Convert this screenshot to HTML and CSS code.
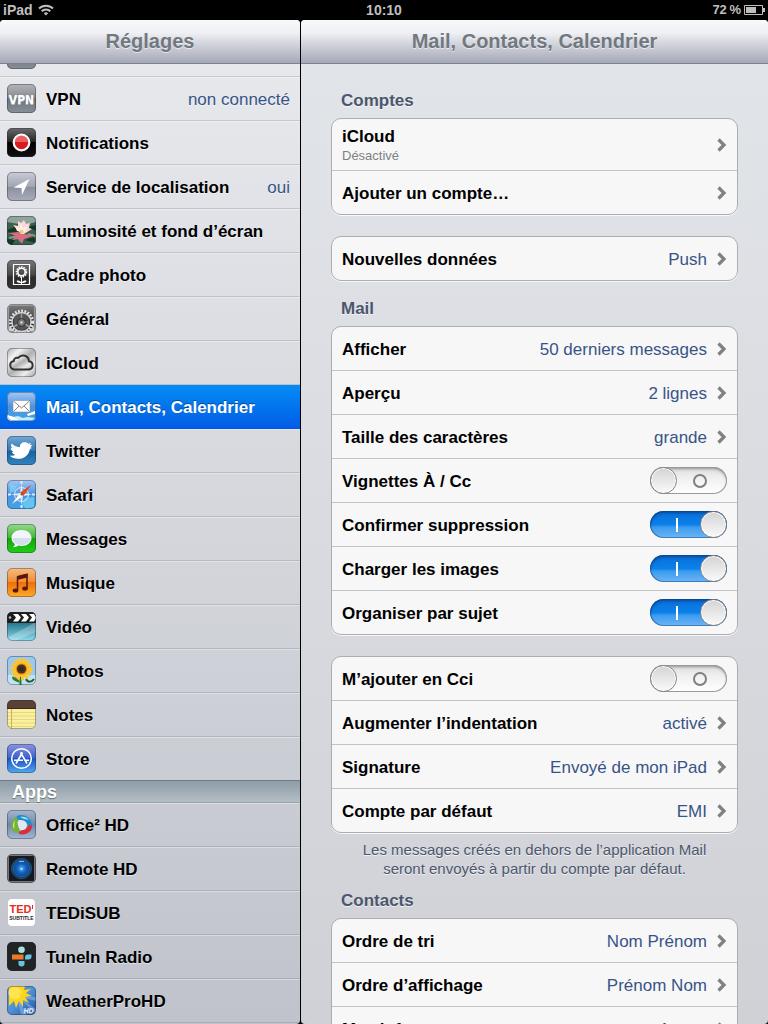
FILE: index.html
```html
<!DOCTYPE html>
<html lang="fr">

<head>
    <meta charset="UTF-8">
    <meta name="viewport" content="width=device-width, initial-scale=1.0">
    <link rel="stylesheet" href="styles.css">
    <title>Réglages</title>
</head>

<body>

    <!-- gradients shared by the icons -->
    <svg class="defs" aria-hidden="true">
        <defs>
            <linearGradient id="grey" x2="0" y2="1"><stop offset="0" stop-color="#b3b5b9"/><stop offset=".5" stop-color="#84888e"/><stop offset=".5" stop-color="#6d737b"/><stop offset="1" stop-color="#888f97"/></linearGradient>
            <linearGradient id="black" x2="0" y2="1"><stop offset="0" stop-color="#6b6b6b"/><stop offset=".5" stop-color="#222"/><stop offset=".5" stop-color="#000"/><stop offset="1" stop-color="#111"/></linearGradient>
            <linearGradient id="silver" x2="0" y2="1"><stop offset="0" stop-color="#c9ccd6"/><stop offset=".5" stop-color="#a2a6b2"/><stop offset=".5" stop-color="#8b8f9d"/><stop offset="1" stop-color="#a9adba"/></linearGradient>
            <linearGradient id="dark" x2="0" y2="1"><stop offset="0" stop-color="#777"/><stop offset=".5" stop-color="#484848"/><stop offset=".6" stop-color="#2c2c2c"/><stop offset="1" stop-color="#333"/></linearGradient>
            <linearGradient id="metal" x2="1" y2="1"><stop offset="0" stop-color="#aaa"/><stop offset=".25" stop-color="#f2f2f2"/><stop offset=".5" stop-color="#b0b0b0"/><stop offset=".75" stop-color="#eee"/><stop offset="1" stop-color="#999"/></linearGradient>
            <linearGradient id="sky" x2="0" y2="1"><stop offset="0" stop-color="#a6c8f5"/><stop offset=".5" stop-color="#4d93e2"/><stop offset="1" stop-color="#3ba6ea"/></linearGradient>
            <linearGradient id="twitter" x2="0" y2="1"><stop offset="0" stop-color="#74a9d4"/><stop offset=".5" stop-color="#2f78b4"/><stop offset=".5" stop-color="#14619f"/><stop offset="1" stop-color="#3284bd"/></linearGradient>
            <linearGradient id="green" x2="0" y2="1"><stop offset="0" stop-color="#98d98e"/><stop offset=".5" stop-color="#3bb731"/><stop offset=".5" stop-color="#17a30f"/><stop offset="1" stop-color="#1fcf14"/></linearGradient>
            <linearGradient id="orange" x2="0" y2="1"><stop offset="0" stop-color="#f6bf83"/><stop offset=".5" stop-color="#ef8a30"/><stop offset=".5" stop-color="#ee6f09"/><stop offset="1" stop-color="#ffab2b"/></linearGradient>
            <linearGradient id="film" x2="0" y2="1"><stop offset="0.300" stop-color="#176a80"/><stop offset="1" stop-color="#8fdcec"/></linearGradient>
            <linearGradient id="store" x2="0" y2="1"><stop offset="0" stop-color="#8a96e0"/><stop offset=".5" stop-color="#3c5ecb"/><stop offset=".5" stop-color="#1f52c4"/><stop offset="1" stop-color="#4fa9ee"/></linearGradient>
            <linearGradient id="office" x2="0" y2="1"><stop offset="0" stop-color="#a9b8cb"/><stop offset=".5" stop-color="#6d88ad"/><stop offset="1" stop-color="#a5b8d2"/></linearGradient>
            <radialGradient id="lens"><stop offset="0" stop-color="#5fb5ff"/><stop offset=".4" stop-color="#1568c4"/><stop offset="1" stop-color="#073463"/></radialGradient>
            <linearGradient id="weather" x2="1" y2="1"><stop offset="0" stop-color="#5c9fe0"/><stop offset=".5" stop-color="#4f90d8"/><stop offset="1" stop-color="#1c4e9c"/></linearGradient>
        </defs>
        <symbol id="chevron" viewBox="0 0 10 14"><path d="M1.500 1.500L7 7l-5.500 5.500" fill="none" stroke="#808080" stroke-width="3.200"/></symbol>
    </svg>

    <header class="statusbar">
        <div class="status-left">
            <span>iPad</span>
            <svg width="16" height="12" viewBox="0 0 16 12" fill="none" stroke="#bfbfbf" stroke-width="2"><path d="M1 4.500a10 10 0 0 1 14 0M3.700 7.300a6 6 0 0 1 8.600 0"/><path d="M8 11.500L5.800 9.300a3.200 3.200 0 0 1 4.400 0z" fill="#bfbfbf" stroke="none"/></svg>
        </div>
        <time>10:10</time>
        <div class="status-right">
            <span>72&#8201;%</span>
            <svg width="21" height="10" viewBox="0 0 21 10"><path d="M.5.500h18v9H.5z" fill="none" stroke="#bfbfbf"/><path d="M2 2h10v6H2zM19 3h2v4h-2z" fill="#bfbfbf"/></svg>
        </div>
    </header>

    <div class="panels">

        <aside class="sidebar">
            <h1 class="titlebar">Réglages</h1>
            <nav class="menu">
                <ul class="menu-list">
                    <li><a href="#" aria-label="Réseau"><svg class="icon" viewBox="0 0 29 29"><rect width="29" height="29" fill="url(#grey)"/></svg></a></li>
                    <li><a href="#">
                        <svg class="icon" viewBox="0 0 29 29"><rect width="29" height="29" fill="url(#grey)"/><text x="14.500" y="19.500" font-size="12" font-weight="bold" font-family="DejaVu Sans Condensed, Liberation Sans, sans-serif" text-anchor="middle" fill="#fff">VPN</text></svg>
                        <span>VPN</span><em>non connecté</em></a></li>
                    <li><a href="#">
                        <svg class="icon" viewBox="0 0 29 29"><rect width="29" height="29" fill="url(#black)"/><circle cx="14.500" cy="14.500" r="7.800" fill="#d81b1e" stroke="#fff" stroke-width="2.200"/><path d="M8 14a6.500 6.500 0 0 1 13 0z" fill="#f08080" opacity=".7"/></svg>
                        <span>Notifications</span></a></li>
                    <li><a href="#">
                        <svg class="icon" viewBox="0 0 29 29"><rect width="29" height="29" fill="url(#silver)"/><path d="M22.500 7L6.500 15.500l8 .5.500 7z" fill="#fff"/></svg>
                        <span>Service de localisation</span><em>oui</em></a></li>
                    <li><a href="#">
                        <svg class="icon" viewBox="0 0 29 29"><rect width="29" height="29" fill="#38604a"/><path d="M0 0h29v6L18 9 0 6z" fill="#8ea59b"/><path d="M0 14l8-3 4 5-7 4zM20 11l9-2v6zM18 24l9-3 2 6zM0 23l8 1-3 5H0z" fill="#193527"/><path d="M2 22l8-2 4 6M21 18l8 2" stroke="#6ca27f" stroke-width="2" fill="none"/><path d="M1 17l10-1 4 2 13 1-8 3-3 1-2 5-3-5-7 1 4-4z" fill="#dc6a83"/><path d="M14 18L6 9l5 1 0-5 3 2 3-3 2 4 4-1-1 5 3 1-8 5z" fill="#fbd7de"/><path d="M10 15l-2-5 4 3 2-6 2 6 4-3-2 6z" fill="#fff4e4"/><circle cx="14.500" cy="15.500" r="2" fill="#eccc74"/></svg>
                        <span>Luminosité et fond d’écran</span></a></li>
                    <li><a href="#">
                        <svg class="icon" viewBox="0 0 29 29"><rect width="29" height="29" fill="url(#dark)"/><path d="M6.500 4.500h16v20h-16z" fill="none" stroke="#fff" stroke-width="1.200"/><circle cx="14.500" cy="12" r="3.700" fill="none" stroke="#fff" stroke-width="1.600"/><circle cx="14.500" cy="12" r="5" fill="none" stroke="#fff" stroke-width="1.500" stroke-dasharray="1.500 1"/><path d="M14.500 17v7" stroke="#fff"/><path d="M14.500 23c-1-2-3-3-5-2 1 2 3 2 5 2 2 0 4 0 5-2-2-1-4 0-5 2" fill="#fff"/></svg>
                        <span>Cadre photo</span></a></li>
                    <li><a href="#">
                        <svg class="icon" viewBox="0 0 29 29"><rect width="29" height="29" fill="#b9bbbd"/><rect x="2" y="2" width="25" height="25" rx="2" fill="url(#dark)" stroke="#777"/><circle cx="14.500" cy="18" r="11" fill="none" stroke="#e3e3e3" stroke-width="3" stroke-dasharray="1.800 1.400"/><circle cx="14.500" cy="18" r="9.500" fill="none" stroke="#d0d0d0" stroke-width="1.500"/><circle cx="14.500" cy="18" r="8" fill="#555"/><path d="M14.500 18V9M14.500 18l8 5M14.500 18l-8 5" stroke="#999" stroke-width="1.500"/><circle cx="14.500" cy="18.500" r="4" fill="#777" stroke="#303030"/><circle cx="14.500" cy="18.500" r="1.200" fill="#ddd"/><path d="M2 22l6 5H2zM27 22l-6 5h6z" fill="#ccc"/></svg>
                        <span>Général</span></a></li>
                    <li><a href="#">
                        <svg class="icon" viewBox="0 0 29 29"><rect width="29" height="29" fill="url(#metal)"/><path d="M7 21.500a4.300 4.300 0 0 1-.2-8.500 3.500 3.500 0 0 1 4.500-3.200 6 6 0 0 1 10.700 3.400 4.200 4.200 0 0 1 .2 8.300z" fill="url(#metal)" stroke="#333" stroke-width="2"/></svg>
                        <span>iCloud</span></a></li>
                    <li class="selected"><a href="#" aria-current="page">
                        <svg class="icon" viewBox="0 0 29 29"><rect width="29" height="29" fill="url(#sky)"/><path d="M0 23l6 2 5-1 5 2 4-1 9 1v3H0z" fill="#c9ecfb"/><path d="M0 23l7 2 6 4H0zM20 22l8-3v3l-7 2z" fill="#fff"/><rect x="6" y="8.500" width="17" height="11.500" fill="#fff" stroke="#8b9299" stroke-width=".6"/><path d="M6.500 9l8 7 8-7M6.500 19.500l5.500-5.500M22.500 19.500L17 14" fill="none" stroke="#777" stroke-width=".9"/></svg>
                        <span>Mail, Contacts, Calendrier</span></a></li>
                    <li><a href="#">
                        <svg class="icon" viewBox="0 0 29 29"><rect width="29" height="29" fill="url(#twitter)"/><path d="M2.500 19.500c2 .5 4 .2 6-.6-2-.3-3-1.400-3.600-2.800h1.800c-2-1-3-2.300-3-4.300l1.800.5C3.700 10.500 3.700 9 4.700 7.500c2.300 2.300 5 3.500 8.300 3.700-.4-3 1.700-5 4.800-5 1.500 0 2.700.5 3.600 1.500l2.600-.7-1 2.100 2.500.1-2.200 2 1.700.8-2.200.9C22.300 18.500 17.500 22.800 11 22.800c-3.300-.1-6.200-.8-8.500-3.300z" fill="#fff"/></svg>
                        <span>Twitter</span></a></li>
                    <li><a href="#">
                        <svg class="icon" viewBox="0 0 29 29"><rect width="29" height="29" fill="url(#sky)"/><path d="M18 18l9-1v10l-8 2-4-5zM3 4l7 2-2 5-5 2z" fill="#7fdcf5" opacity=".6"/><circle cx="14.500" cy="14.500" r="7" fill="none" stroke="#d8eeff"/><path d="M14.500 4l1.500 9 9 1.500-9 1.500-1.500 9-1.500-9-9-1.500 9-1.500z" fill="#e0f0ff"/><path d="M14.500 1v3M14.500 25v3M1 14.500h3M25 14.500h3" stroke="#d8eeff" stroke-width="2"/><path d="M24.500 4.500L12.800 12.800l3.400 3.400z" fill="#e34a1c"/><path d="M5 24l7.800-11.200 3.400 3.400z" fill="#fff" stroke="#aaa" stroke-width=".4"/><circle cx="14.500" cy="14.500" r="1" fill="#555"/></svg>
                        <span>Safari</span></a></li>
                    <li><a href="#">
                        <svg class="icon" viewBox="0 0 29 29"><rect width="29" height="29" fill="url(#green)"/><path d="M14.500 6c5.800 0 10 3.500 10 8s-4.200 8-10 8c-1.200 0-2.300-.1-3.300-.4C10 22.800 8 23.500 6 23.300c1-1 1.700-2 1.800-3.300C5.800 18.600 4.500 16.500 4.500 14c0-4.500 4.200-8 10-8z" fill="#f2f5fa"/><path d="M5.500 14h18c-.5 5-5 7-9 7s-8.500-2-9-7z" fill="#d5dfec"/></svg>
                        <span>Messages</span></a></li>
                    <li><a href="#">
                        <svg class="icon" viewBox="0 0 29 29"><rect width="29" height="29" fill="url(#orange)"/><path d="M10.500 22V9l9.500-2.500V20" fill="none" stroke="#5b160a" stroke-width="1.500"/><path d="M10 8l10.500-2.500v4L10 12z" fill="#5b160a"/><ellipse cx="8.500" cy="22.500" rx="2.800" ry="2.100" fill="#5b160a"/><ellipse cx="18" cy="20.500" rx="2.800" ry="2.100" fill="#5b160a"/></svg>
                        <span>Musique</span></a></li>
                    <li><a href="#">
                        <svg class="icon" viewBox="0 0 29 29"><rect width="29" height="29" fill="url(#film)"/><path d="M0 26L27 11h2v9L8 29H0z" fill="#fff" opacity=".25"/><rect width="29" height="11" fill="#1c1c1c"/><path d="M6 2h5l3 3.500L11 9.500H6L9 5.500zM14 2h5l3 3.500-3 4h-5l3-4zM22 2h5l2 3v1l-2 3.500h-5l3-4z" fill="#fff"/><circle cx="3" cy="5.500" r="1.300" fill="#bbb"/></svg>
                        <span>Vidéo</span></a></li>
                    <li><a href="#">
                        <svg class="icon" viewBox="0 0 29 29"><rect width="29" height="29" fill="#9cc9f1"/><path d="M0 19h29v10H0z" fill="#bfe2f7"/><path d="M13.500 20v9" stroke="#337a25" stroke-width="2"/><path d="M13 27c-1-4-4-7-8-6 0 3 3 4 8 6" fill="#337a25"/><path d="M19 23c2 4 6 3 8 0" fill="none" stroke="#285e28" stroke-width="2"/><circle cx="14.500" cy="13" r="8" fill="#fdb81e"/><circle cx="14.500" cy="13" r="8.500" fill="none" stroke="#ffc629" stroke-width="5" stroke-dasharray="2.600 1.100"/><circle cx="14.500" cy="13" r="5.500" fill="#e98a0c"/><circle cx="14.500" cy="13" r="4.600" fill="#4a2f1a"/><circle cx="14.500" cy="13" r="2.200" fill="#282b30"/></svg>
                        <span>Photos</span></a></li>
                    <li><a href="#">
                        <svg class="icon" viewBox="0 0 29 29"><rect width="29" height="29" fill="#fbf19a"/><path d="M0 12.500h29M0 16h29M0 19.500h29M0 23h29M0 26.500h29" stroke="#dcd188" stroke-width=".8"/><path d="M4.500 9v20" stroke="#c79a5b" stroke-width=".8"/><rect width="29" height="8.500" fill="#5b4038"/><path d="M0 8.500h29" stroke="#3c2823" stroke-width="1.200"/></svg>
                        <span>Notes</span></a></li>
                    <li class="last"><a href="#">
                        <svg class="icon" viewBox="0 0 29 29"><rect width="29" height="29" fill="url(#store)"/><circle cx="14.500" cy="14.500" r="9.800" fill="none" stroke="#fff" stroke-width="1.500"/><path d="M15.500 8.500L9 19.500M13.500 8.500l6.500 11M7 16.300h9M18.500 16.300H22" stroke="#fff" stroke-width="1.600" fill="none"/></svg>
                        <span>Store</span></a></li>
                </ul>

                <h2 class="menu-heading">Apps</h2>

                <ul class="menu-list">
                    <li><a href="#">
                        <svg class="icon" viewBox="0 0 29 29"><rect width="29" height="29" fill="url(#office)"/><circle cx="14.500" cy="15" r="5.500" fill="#dfe7f0"/><path d="M10 6c6-3 14 1 15 9-3 1-5-1-6-3-2-2-5-2-7-2-2-1-3-2-2-4z" fill="#1b8fc9"/><path d="M10 6c-6 3-8 12-3 16 2 2 5 1 6-2-2-3-3-7-2-10-1-1-2-2-1-4z" fill="#75b03b"/><path d="M25 15c1 6-6 11-13 9-1-2 2-4 5-4 3-1 4-4 5-5 1 0 2 1 3 0z" fill="#d92f3d"/><path d="M13 7c4-1 7 0 9 3-3-1-6-1-9-3z" fill="#9fdcf5"/><path d="M8 10c-3 4-2 7-1 9 1-3 0-5 1-9z" fill="#c5e58a"/></svg>
                        <span>Office² HD</span></a></li>
                    <li><a href="#">
                        <svg class="icon" viewBox="0 0 29 29"><rect width="29" height="29" fill="#777"/><rect x="2" y="2" width="25" height="25" rx="1" fill="#141a21"/><circle cx="14.500" cy="14.500" r="10" fill="url(#lens)" stroke="#35587a"/><circle cx="14.500" cy="14.500" r="8" fill="none" stroke="#2473c0" stroke-width=".7"/><path d="M12 7.500h5" stroke="#8fb9dd"/><circle cx="14.500" cy="15" r="1" fill="#c5e8ff"/></svg>
                        <span>Remote HD</span></a></li>
                    <li><a href="#">
                        <svg class="icon plain" viewBox="0 0 29 29"><rect x="1" y="1" width="27" height="27" rx="4" fill="#fff"/><text x="13.500" y="15" font-size="11" font-weight="bold" text-anchor="middle" fill="#e62b1e">TED</text><path d="M25.500 7v4" stroke="#e62b1e"/><text x="14.500" y="21.500" font-size="5" font-weight="bold" text-anchor="middle" fill="#222">SUBTITLE</text></svg>
                        <span>TEDiSUB</span></a></li>
                    <li><a href="#">
                        <svg class="icon" viewBox="0 0 29 29"><rect width="29" height="29" fill="#222325"/><circle cx="14.500" cy="7.800" r="3.300" fill="#a9e2e4"/><path d="M5 12.500h11.500v5H5z" fill="#f0782a"/><path d="M18 17.500v-2c0-2 1-3 3-3h3.500v2c0 2-1 3-3 3z" fill="#64c4e3"/><path d="M11.500 19h6v3c0 1.500-1 2.500-3 2.500s-3-1-3-2.500z" fill="#64c4e3"/></svg>
                        <span>TuneIn Radio</span></a></li>
                    <li><a href="#">
                        <svg class="icon" viewBox="0 0 29 29"><rect width="29" height="29" fill="url(#weather)"/><path d="M10 10l19 1v4zM10 10l19 13v5zM10 10l10 19h-6z" fill="#a8cdf2" opacity=".4"/><path d="M0 0h18l-1 4 7-1-5 4 6 3-7 1 4 6-6-3 0 7-4-6-3 7-2-7-5 5V0z" fill="#ffd21c"/><circle cx="8" cy="7" r="6.500" fill="#ffe44d"/><text x="21.500" y="27" font-size="7" font-weight="bold" font-style="italic" text-anchor="middle" fill="#dceaf8">HD</text></svg>
                        <span>WeatherProHD</span></a></li>
                </ul>
            </nav>
        </aside>

        <main class="content">
            <h1 class="titlebar">Mail, Contacts, Calendrier</h1>

            <div class="settings">
                <section>
                    <h2>Comptes</h2>
                    <div class="group">
                        <a class="row account" href="#"><span class="label">iCloud<small>Désactivé</small></span><svg class="chevron"><use href="#chevron"/></svg></a>
                        <a class="row" href="#"><span class="label">Ajouter un compte…</span><svg class="chevron"><use href="#chevron"/></svg></a>
                    </div>
                    <div class="group">
                        <a class="row" href="#"><span class="label">Nouvelles données</span><span class="value">Push</span><svg class="chevron"><use href="#chevron"/></svg></a>
                    </div>
                </section>

                <section>
                    <h2>Mail</h2>
                    <div class="group">
                        <a class="row" href="#"><span class="label">Afficher</span><span class="value">50 derniers messages</span><svg class="chevron"><use href="#chevron"/></svg></a>
                        <a class="row" href="#"><span class="label">Aperçu</span><span class="value">2 lignes</span><svg class="chevron"><use href="#chevron"/></svg></a>
                        <a class="row" href="#"><span class="label">Taille des caractères</span><span class="value">grande</span><svg class="chevron"><use href="#chevron"/></svg></a>
                        <label class="row"><span class="label">Vignettes À / Cc</span><input class="switch" type="checkbox"></label>
                        <label class="row"><span class="label">Confirmer suppression</span><input class="switch" type="checkbox" checked></label>
                        <label class="row"><span class="label">Charger les images</span><input class="switch" type="checkbox" checked></label>
                        <label class="row"><span class="label">Organiser par sujet</span><input class="switch" type="checkbox" checked></label>
                    </div>
                    <div class="group">
                        <label class="row"><span class="label">M’ajouter en Cci</span><input class="switch" type="checkbox"></label>
                        <a class="row" href="#"><span class="label">Augmenter l’indentation</span><span class="value">activé</span><svg class="chevron"><use href="#chevron"/></svg></a>
                        <a class="row" href="#"><span class="label">Signature</span><span class="value">Envoyé de mon iPad</span><svg class="chevron"><use href="#chevron"/></svg></a>
                        <a class="row" href="#"><span class="label">Compte par défaut</span><span class="value">EMI</span><svg class="chevron"><use href="#chevron"/></svg></a>
                    </div>
                    <p class="note">Les messages créés en dehors de l’application Mail seront envoyés à partir du compte par défaut.</p>
                </section>

                <section>
                    <h2>Contacts</h2>
                    <div class="group">
                        <a class="row" href="#"><span class="label">Ordre de tri</span><span class="value">Nom Prénom</span><svg class="chevron"><use href="#chevron"/></svg></a>
                        <a class="row" href="#"><span class="label">Ordre d’affichage</span><span class="value">Prénom Nom</span><svg class="chevron"><use href="#chevron"/></svg></a>
                        <a class="row" href="#"><span class="label">Mes infos</span><span class="value">Aucun</span><svg class="chevron"><use href="#chevron"/></svg></a>
                    </div>
                </section>
            </div>
        </main>

    </div>

</body>

</html>
```
FILE: styles.css
```css
*, *::before, *::after {
    box-sizing: border-box;
}

body {
    margin: 0;
    height: 100vh;
    display: flex;
    flex-direction: column;
    overflow: hidden;
    background-color: #000;
    font-family: "Liberation Sans", Arial, sans-serif;
    font-size: 17px;
}

h1, h2, p, ul {
    margin: 0;
    padding: 0;
}

a {
    color: inherit;
    text-decoration: none;
}

.defs {
    position: absolute;
    width: 0;
    height: 0;
}

/* status bar */
.statusbar {
    display: grid;
    grid-template-columns: 1fr auto 1fr;
    align-items: center;
    height: 20px;
    padding: 0 3px;
    color: #bfbfbf;
    font-size: 14px;
    font-weight: bold;
    line-height: 18px;
}

.status-left, .status-right {
    display: flex;
    align-items: center;
    gap: 5px;
}

.status-right {
    justify-content: flex-end;
    gap: 3px;
    font-size: 13px;
}

/* two panels */
.panels {
    flex: 1;
    min-height: 0;
    display: flex;
    gap: 1px;
}

.sidebar, .content {
    display: flex;
    flex-direction: column;
    overflow: hidden;
    border-radius: 4px;
}

.sidebar {
    width: 300px;
    background: linear-gradient(#e9eaee, #c0c3cb);
}

.content {
    flex: 1;
    background: linear-gradient(#e2e5ea, #d0d1d6);
}

.titlebar {
    flex: none;
    height: 44px;
    border-bottom: 1px solid #7c8192;
    background: linear-gradient(#f8f9fa, #eff0f3 30%, #d3d5dd 55%, #a5a8b8);
    color: #717880;
    font-size: 20px;
    line-height: 43px;
    text-align: center;
    text-shadow: 0 1px 0 rgba(255, 255, 255, 0.6);
}

/* sidebar menu, scrolled a little */
.menu {
    flex: 1;
    min-height: 0;
    overflow: hidden;
}

.menu-list {
    list-style: none;
}

.menu-list:first-child {
    margin-top: -31px;
}

.menu-list li {
    height: 44px;
    border-bottom: 1px solid rgba(110, 115, 125, 0.27);
    box-shadow: inset 0 1px 0 rgba(255, 255, 255, 0.35);
}

.menu-list a {
    display: flex;
    align-items: center;
    height: 43px;
    padding: 0 10px 0 7px;
    gap: 10px;
    font-weight: bold;
    text-shadow: 0 1px 0 rgba(255, 255, 255, 0.5);
}

.menu-list span, .menu-list em {
    padding-top: 2px;
}

.menu-list em {
    margin-left: auto;
    color: #385487;
    font-style: normal;
    font-weight: normal;
}

.menu-list .selected {
    border-bottom-color: #0157d8;
    background: linear-gradient(#058cf5, #015de6);
    box-shadow: none;
    color: #fff;
}

.menu-list .selected a {
    text-shadow: 0 -1px 0 rgba(0, 0, 0, 0.4);
}

.menu-list .last {
    border-bottom-color: #6f7c87;
}

.icon {
    flex: none;
    width: 29px;
    height: 29px;
    border-radius: 5px;
    outline: 1px solid rgba(40, 45, 60, 0.4);
    outline-offset: -1px;
}

.icon.plain {
    outline: none;
}

.menu-heading {
    height: 22px;
    padding-left: 12px;
    border-bottom: 1px solid #98a3ad;
    background: linear-gradient(#8d9ca7, #b4bec6);
    color: #fff;
    font-size: 18px;
    line-height: 22px;
    text-shadow: 0 1px 1px rgba(0, 0, 0, 0.4);
}

/* right side */
.settings {
    flex: 1;
    min-height: 0;
    overflow: hidden;
    padding: 9px 30px 0;
}

.settings h2 {
    padding: 17px 10px 6px;
    color: #4c566c;
    font-size: 17px;
    line-height: 22px;
    text-shadow: 0 1px 0 rgba(255, 255, 255, 0.7);
}

.group {
    border: 1px solid #abadb3;
    border-radius: 10px;
    background-color: #f7f7f7;
    box-shadow: 0 1px 0 rgba(255, 255, 255, 0.8);
}

.group + .group {
    margin-top: 21px;
}

.row {
    display: flex;
    align-items: center;
    gap: 10px;
    height: 44px;
    padding: 0 10px;
    border-bottom: 1px solid #c3c4c7;
}

.row:last-child {
    height: 43px;
    border-bottom: none;
}

.account {
    height: 52px;
}

.label, .value {
    padding-top: 2px;
}

.label {
    flex: 1;
    font-weight: bold;
}

.label small {
    display: block;
    color: #808080;
    font-size: 13px;
    font-weight: normal;
    line-height: 18px;
}

.value {
    color: #385487;
}

.chevron {
    width: 10px;
    height: 14px;
}

.note {
    margin-bottom: -6px;
    padding: 7px 20px 1px;
    color: #4c566c;
    font-size: 15px;
    line-height: 19px;
    text-align: center;
    text-shadow: 0 1px 0 rgba(255, 255, 255, 0.7);
}

/* on / off switch */
.switch {
    appearance: none;
    display: flex;
    align-items: center;
    width: 77px;
    height: 27px;
    margin: 0;
    border-radius: 14px;
    background: linear-gradient(#dcdcdc, #f0f0f0 40%, #fff);
    box-shadow: inset 0 0 0 1px #9a9a9a, inset 0 2px 3px rgba(0, 0, 0, 0.35);
}

.switch::before {
    content: "";
    width: 27px;
    height: 27px;
    border: 1px solid #858585;
    border-radius: 50%;
    background: linear-gradient(#d3d3d3, #fafafa);
    box-shadow: inset 0 0 0 1px #fff;
}

.switch::after {
    content: "";
    width: 14px;
    height: 14px;
    margin-left: 16px;
    border: 2px solid #808080;
    border-radius: 50%;
}

.switch:checked {
    flex-direction: row-reverse;
    background: linear-gradient(#0a6fd8, #0a80ea 50%, #3c9bf0 60%, #6db5f5);
    box-shadow: inset 0 0 0 1px rgba(20, 70, 130, 0.5), inset 0 2px 3px rgba(0, 30, 90, 0.5);
}

.switch:checked::after {
    width: 2px;
    margin: 0 22px 0 0;
    border: none;
    border-radius: 0;
    background-color: #fff;
}
```
